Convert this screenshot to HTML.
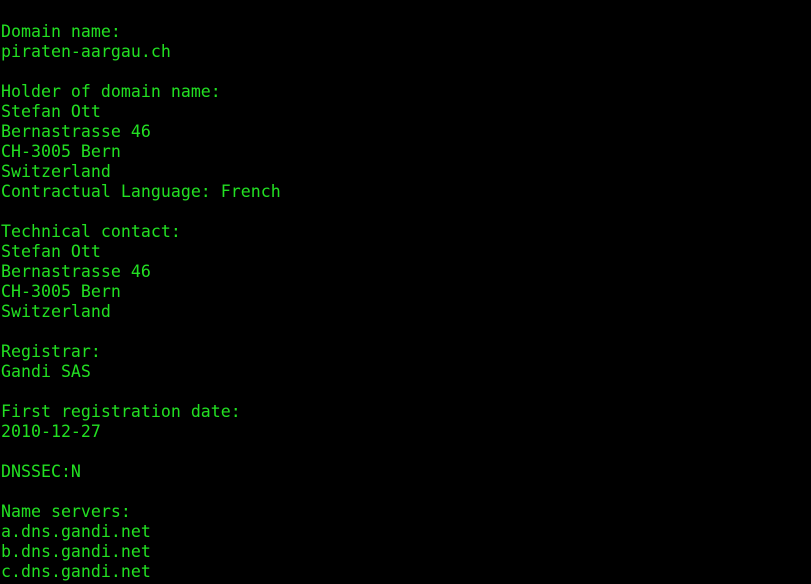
<!DOCTYPE html>
<html><head><meta charset="utf-8"><style>
html,body{margin:0;padding:0;background:#000;width:811px;height:584px;overflow:hidden}
pre{margin:0;padding:22px 0 0 1px;font-family:"DejaVu Sans Mono","Liberation Mono",monospace;font-size:16.6px;line-height:20px;color:#22e022}
</style></head><body><pre>Domain name:
piraten-aargau.ch

Holder of domain name:
Stefan Ott
Bernastrasse 46
CH-3005 Bern
Switzerland
Contractual Language: French

Technical contact:
Stefan Ott
Bernastrasse 46
CH-3005 Bern
Switzerland

Registrar:
Gandi SAS

First registration date:
2010-12-27

DNSSEC:N

Name servers:
a.dns.gandi.net
b.dns.gandi.net
c.dns.gandi.net</pre></body></html>
